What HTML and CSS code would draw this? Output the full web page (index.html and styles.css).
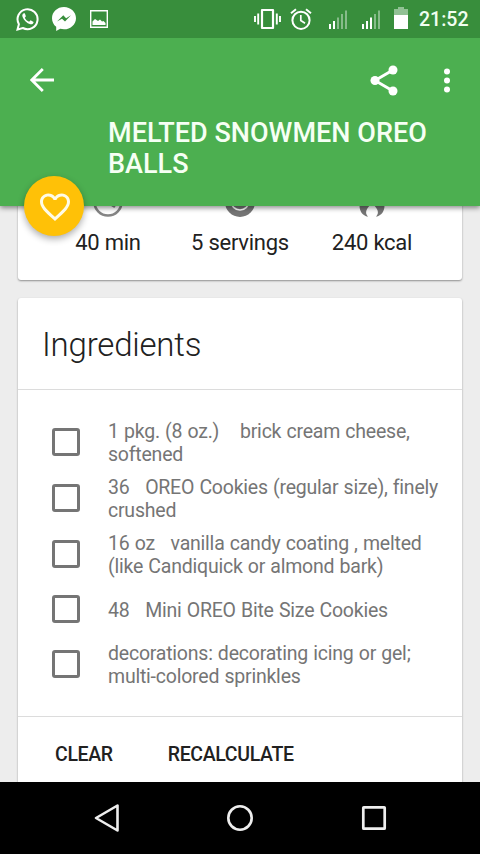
FILE: index.html
```html
<!DOCTYPE html>
<html lang="en">
<head>
<meta charset="utf-8">
<title>Melted Snowmen Oreo Balls</title>
<link rel="stylesheet" href="styles.css">
</head>
<body>
<div class="status">
  <div class="status-left">
    <svg width="24" height="24" viewBox="0 0 24 24"><path d="M1.500 22.500l1.400-5.300A10 10 0 1 1 6.800 21z" fill="none" stroke="#fff" stroke-width="2"/><path d="M8 6.200c-1.700.6-2 2-1.400 3.700 1.400 3.500 4.200 6.300 7.700 7.300 1.900.4 3.100-.7 3.300-2.300l-3-1.600-1.500 1.500c-2-.8-3.500-2.300-4.300-4.100l1.100-1.500-1.100-3z" fill="#fff"/></svg>
    <svg width="24" height="24" viewBox="0 0 24 24"><path d="M12 0C5.300 0 0 4.900 0 11.200c0 3.500 1.600 6.600 4.200 8.600V24l4-2.200c1.200.3 2.500.5 3.800.5 6.700 0 12-4.900 12-11.100S18.700 0 12 0z" fill="#fff"/><path d="M5 14.500l6.300-6.200 2.800 2.900L19 8.300l-6 6.300-3-2.900z" fill="#388e3c"/></svg>
    <svg width="18" height="18" viewBox="0 0 18 18"><path d="M.7.7h16.600v16.600H.7z" fill="none" stroke="#fff" stroke-width="1.400"/><path d="M2.500 15v-3.500L5 9l3 2 2-1.500 2 2 1.500-.5 2 2v2z" fill="#fff"/></svg>
  </div>
  <div class="status-right">
    <svg width="27" height="22" viewBox="0 0 27 22"><path d="M8 2h11v18H8z" fill="none" stroke="#fff" stroke-width="2.200" stroke-linejoin="round"/><path d="M1 8v6M4.200 5.500v11M22.800 5.500v11M26 8v6" stroke="#fff" stroke-width="1.900"/></svg>
    <svg class="alarm" width="22" height="22" viewBox="0 0 22 22"><g fill="none" stroke="#fff" stroke-width="2"><circle cx="11" cy="12.300" r="8.600"/><path d="M1 5.200l5-4M21 5.200l-5-4"/><path d="M10.800 7v5.500l4.200 2.700" stroke-width="1.700"/></g></svg>
    <svg class="signal" width="19" height="19" viewBox="0 0 19 19"><path d="M0 14h2v5H0zM4 11h2v8H4z" fill="#fff"/><path d="M8 7.500h2V19H8zM12 4h2v15h-2zM16 .5h2V19h-2z" fill="#fff" opacity=".4"/></svg>
    <svg class="signal" width="19" height="19" viewBox="0 0 19 19"><path d="M0 14h2v5H0zM4 11h2v8H4zM8 7.500h2V19H8z" fill="#fff"/><path d="M12 4h2v15h-2zM16 .5h2V19h-2z" fill="#fff" opacity=".4"/></svg>
    <svg class="battery" width="14" height="22" viewBox="0 0 14 22"><path d="M0 2h4V0h6v2h4v6H0z" fill="#fff" opacity=".45"/><path d="M0 8h14v14H0z" fill="#fff"/></svg>
    <span class="clock">21:52</span>
  </div>
</div>

<header class="header">
  <div class="toolbar">
    <svg width="24" height="24" viewBox="0 0 24 24"><path d="M24 12H2M12.800 1L1.800 12l11 11" fill="none" stroke="#fff" stroke-width="2.800"/></svg>
    <svg class="share" width="28" height="31" viewBox="0 0 28 31"><path d="M23 5L5 15.500 23 26" fill="none" stroke="#fff" stroke-width="2.900"/><g fill="#fff"><circle cx="23" cy="5" r="4.500"/><circle cx="5" cy="15.500" r="4.500"/><circle cx="23" cy="26" r="4.500"/></g></svg>
    <svg class="more" width="6" height="25" viewBox="0 0 6 25"><g fill="#fff"><circle cx="3" cy="3.500" r="3"/><circle cx="3" cy="12.500" r="3"/><circle cx="3" cy="21.500" r="3"/></g></svg>
  </div>
  <h1 class="title">MELTED SNOWMEN OREO BALLS</h1>
  <button class="fab" aria-label="Favorite"><svg width="36" height="36" viewBox="0 0 24 24"><path fill="#fffbe6" d="M16.500 3c-1.740 0-3.410.81-4.500 2.090C10.910 3.810 9.240 3 7.500 3 4.420 3 2 5.420 2 8.500c0 3.780 3.400 6.860 8.550 11.540L12 21.350l1.450-1.320C18.600 15.360 22 12.280 22 8.500 22 5.420 19.580 3 16.500 3zm-4.400 15.550l-.1.100-.1-.1C7.140 14.240 4 11.390 4 8.500 4 6.500 5.500 5 7.500 5c1.540 0 3.040.99 3.570 2.360h1.870C13.460 5.990 14.960 5 16.500 5c2 0 3.500 1.500 3.500 3.500 0 2.890-3.140 5.740-7.900 10.050z"/></svg></button>
</header>

<main class="content">
  <section class="card stats">
    <div class="stat"><svg width="30" height="30" viewBox="0 0 30 30"><g fill="none" stroke="#858585" stroke-width="2.600"><circle cx="15" cy="15" r="13.500"/><path d="M15 7v8.500l7 4.500"/></g></svg><span>40 min</span></div>
    <div class="stat"><svg width="30" height="30" viewBox="0 0 30 30"><circle cx="15" cy="15" r="15" fill="#757575"/><circle cx="15" cy="14" r="9" fill="none" stroke="#fff" stroke-width="1.600"/></svg><span>5 servings</span></div>
    <div class="stat"><svg width="30" height="30" viewBox="0 0 30 30"><path d="M15 0c2 6 12.500 9 12.500 18.500 0 6-3 10-8.500 11.300 2-2.200 2.300-4.300 1.500-6.500-.9-2.500-3-4.300-5.500-8.300-2.500 4-4.600 5.800-5.500 8.300-.8 2.200-.5 4.300 1.500 6.500C5.500 28.500 2.500 24.500 2.500 18.500 2.500 11 10 8 15 0z" fill="#757575"/></svg><span>240 kcal</span></div>
  </section>

  <section class="card ingredients">
    <h2 class="heading">Ingredients</h2>
    <ul class="list">
      <li class="item"><i class="box"></i><span>1 pkg. (8 oz.)    brick cream cheese, softened</span></li>
      <li class="item"><i class="box"></i><span>36   OREO Cookies (regular size), finely crushed</span></li>
      <li class="item"><i class="box"></i><span>16 oz   vanilla candy coating , melted (like Candiquick or almond bark)</span></li>
      <li class="item single"><i class="box"></i><span>48   Mini OREO Bite Size Cookies</span></li>
      <li class="item"><i class="box"></i><span>decorations: decorating icing or gel; multi-colored sprinkles</span></li>
    </ul>
    <div class="actions"><button class="action">CLEAR</button><button class="action">RECALCULATE</button></div>
  </section>
</main>

<nav class="navbar">
  <svg width="28" height="30" viewBox="0 0 28 30"><path d="M25.500 2.500v25L4 15z" fill="none" stroke="#eee" stroke-width="2.600" stroke-linejoin="round"/></svg>
  <svg width="28" height="30" viewBox="0 0 28 30"><circle cx="14" cy="15" r="11.700" fill="none" stroke="#eee" stroke-width="2.600"/></svg>
  <svg width="28" height="30" viewBox="0 0 28 30"><rect x="3.300" y="4.300" width="21.400" height="21.400" rx=".5" fill="none" stroke="#eee" stroke-width="2.700"/></svg>
</nav>
</body>
</html>
```

FILE: styles.css
```css
* { box-sizing: border-box; }

body {
  margin: 0;
  width: 480px;
  height: 854px;
  overflow: hidden;
  display: flex;
  flex-direction: column;
  background: #ededed;
  font-family: Roboto, sans-serif;
  color: #212121;
}

svg { display: block; flex: none; }
button { border: 0; padding: 0; background: none; font: inherit; letter-spacing: inherit; color: inherit; }

.status {
  flex: none;
  height: 38px;
  display: flex;
  justify-content: space-between;
  align-items: center;
  padding: 0 12px 0 16px;
  background: #388e3c;
  position: relative;
  z-index: 2;
}
.status-left { display: flex; align-items: center; gap: 12px; }
.status-left svg:last-child { margin-left: 2px; }
.status-right { display: flex; align-items: center; }
.alarm { margin: 0 17px 0 9px; }
.signal { margin-right: 14px; }
.signal + .battery { margin-left: -1px; }
.battery { margin: 0 11px 2px 0; }
.clock { width: 49px; font-size: 19.500px; font-weight: 500; color: #f1fff1; white-space: nowrap; }

.header {
  flex: none;
  height: 168px;
  position: relative;
  z-index: 1;
  background: #4caf50;
  box-shadow: 0 2px 5px rgba(0, 0, 0, .45);
}
.toolbar { height: 84px; display: flex; align-items: center; padding: 0 30px; }
.share { margin-left: auto; }
.more { margin-left: 46px; }
.title {
  margin: -4px 40px 0 108px;
  font-size: 27px;
  letter-spacing: .03px;
  line-height: 31px;
  font-weight: 500;
  color: #f6fff4;
}
.fab {
  position: absolute;
  left: 24px;
  bottom: -30px;
  width: 60px;
  height: 60px;
  padding: 1px 0 0 2px;
  border-radius: 50%;
  display: flex;
  align-items: center;
  justify-content: center;
  background: #ffc107;
  box-shadow: 0 3px 7px rgba(0, 0, 0, .32);
}

.content { flex: 1; min-height: 0; margin-top: -34px; padding: 0 18px; }
.card { background: #fff; border-radius: 3px; box-shadow: 0 1px 2px rgba(0, 0, 0, .4); }

.stats {
  height: 108px;
  margin-bottom: 18px;
  padding: 15px 24px 0;
  display: grid;
  grid-template-columns: repeat(3, 1fr);
}
.stat { display: flex; flex-direction: column; align-items: center; gap: 13px; font-size: 22px; letter-spacing: -.25px; line-height: 26px; white-space: nowrap; }

.ingredients { height: 500px; }
.heading {
  margin: 0;
  height: 92px;
  padding: 0 24px;
  line-height: 94px;
  font-size: 33px;
  letter-spacing: -.2px;
  font-weight: 300;
  border-bottom: 1px solid #dcdcdc;
}
.list {
  list-style: none;
  margin: 0;
  padding: 25px 20px 22px 34px;
  height: 327px;
  border-bottom: 1px solid #dcdcdc;
}
.item {
  height: 56px;
  display: flex;
  align-items: center;
  font-size: 19.500px;
  letter-spacing: -.22px;
  word-spacing: .6px;
  line-height: 23px;
  color: #757575;
  white-space: pre-wrap;
}
.item.single { height: 54px; }
.box { flex: none; width: 28px; height: 28px; margin: 0 28px 2px 0; border: 3px solid #757575; border-radius: 3px; }
.actions { display: flex; gap: 55px; padding: 0 37px; height: 74px; align-items: center; font-size: 19.500px; letter-spacing: -.35px; font-weight: 500; }

.navbar {
  flex: none;
  height: 72px;
  display: flex;
  align-items: center;
  justify-content: space-between;
  padding: 0 92px;
  background: #000;
  position: relative;
}
```
